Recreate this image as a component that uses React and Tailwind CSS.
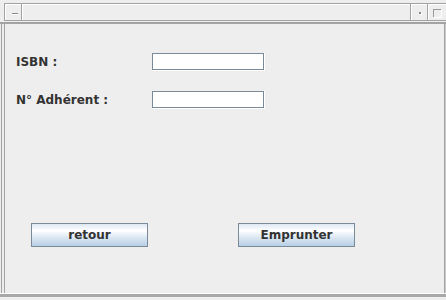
import React from "react"

const line = "bg-[#a3a3a3]"

const Field = () => (
  <div className="w-[113px] h-[18px] bg-white">
    <div className="w-[112px] h-[17px] border border-[#7a8a99]" />
  </div>
)

const Button = ({ children }) => (
  <div className="w-[117px] h-[24px] border border-[#7a8a99] bg-[linear-gradient(to_bottom,#dde8f3_0%,#ffffff_30%,#dde8f3_60%,#b8cfe5_100%)] flex items-center justify-center text-[12px] font-bold text-[#333333]">
    {children}
  </div>
)

export default function App() {
  return (
    <div
      className="w-[446px] h-[300px] bg-[#eeeeee] flex flex-col overflow-hidden"
      style={{ fontFamily: "'DejaVu Sans', sans-serif" }}
    >
      {/* title bar */}
      <div className="mt-[3px] ml-[4px] flex h-[18px] border-t border-b border-[#a3a3a3]">
        <div className="w-[18px] border-l border-r border-[#a3a3a3]">
          <div className="h-full border-t border-l border-white flex items-start">
            <div className="ml-[6px] mt-[8px] w-[6px] h-[1px] bg-[#8a8a8a] shadow-[0_1px_0_#ffffff]" />
          </div>
        </div>
        <div className="flex-1 border-r border-[#a3a3a3]">
          <div className="h-full border-t border-l border-white" />
        </div>
        <div className="w-[17px] border-r border-[#a3a3a3]">
          <div className="h-full border-t border-l border-white">
            <div className="ml-[7px] mt-[7px] w-[2px] h-[2px] bg-[#8a8a8a] shadow-[1px_1px_0_#ffffff]" />
          </div>
        </div>
        <div className="w-[18px]">
          <div className="h-full border-t border-l border-white">
            <div className="ml-[4px] mt-[4px] w-[8px] h-[8px] border-t border-l border-[#9a9a9a] shadow-[1px_1px_0_#ffffff]" />
          </div>
        </div>
      </div>
      <div className={`mt-[1px] h-[2px] ${line}`} />

      {/* body */}
      <div className="flex-1 flex">
        <div className={`ml-[1px] w-[1px] ${line}`} />
        <div className={`ml-[2px] w-[1px] ${line}`} />
        <div className="flex-1 flex flex-col pt-[29px] text-[12px] font-bold text-[#333333]">
          <div className="flex items-center">
            <div className="ml-[11px] w-[136px]">ISBN :</div>
            <Field />
          </div>
          <div className="mt-[20px] flex items-center">
            <div className="ml-[11px] w-[136px]">N° Adhérent :</div>
            <Field />
          </div>
          <div className="mt-[114px] flex ml-[26px] gap-[90px]">
            <Button>retour</Button>
            <Button>Emprunter</Button>
          </div>
        </div>
        <div className={`w-[1px] ${line}`} />
        <div className="w-[1px] bg-[#c8c8c8]" />
      </div>
      <div className="h-[1px] bg-white" />
      <div className="h-[3px] bg-[#a8a8a8]" />
      <div className="h-[3px]" />
    </div>
  )
}
